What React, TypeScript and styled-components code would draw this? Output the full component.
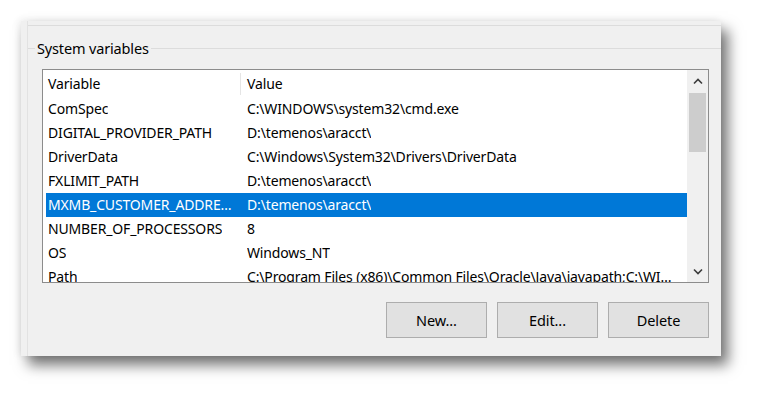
import styled, { createGlobalStyle } from 'styled-components';

const GlobalStyle = createGlobalStyle`
  html, body {
    margin: 0;
    padding: 0;
    background: #ffffff;
  }
  body {
    font-family: 'Noto Sans', 'Open Sans', sans-serif;
    font-size: 14px;
    letter-spacing: -0.15px;
    color: #000000;
  }
`;

const Page = styled.div`
  width: 763px;
  height: 398px;
  padding: 21px 0 0 21px;
  box-sizing: border-box;
`;

const Panel = styled.div`
  width: 700px;
  height: 335px;
  background: #f0f0f0;
  box-shadow: 7px 9px 13px rgba(0, 0, 0, 0.55), -2px -1px 8px rgba(0, 0, 0, 0.08);
  padding-left: 6px;
  box-sizing: border-box;
  display: flex;
  flex-direction: column;
  overflow: hidden;
`;

const Frame = styled.div`
  flex: 1;
  display: flex;
  flex-direction: column;
  border-left: 1px solid #e2e2e2;
`;

const PrevGroupEdge = styled.div`
  height: 4px;
  border-bottom: 1px solid #dcdcdc;
`;

const Group = styled.fieldset`
  margin: 12px 0 0 0;
  padding: 0 0 0 14px;
  border: none;
  border-top: 1px solid #dcdcdc;
  min-inline-size: 0;
`;

const Legend = styled.legend`
  margin-left: -7px;
  padding: 0 2px;
  font-size: 14.5px;
  line-height: 20px;
`;

const ListBox = styled.div`
  margin-top: 11px;
  width: 667px;
  height: 214px;
  box-sizing: border-box;
  border: 1px solid #8c8c8c;
  background: #ffffff;
  display: flex;
  overflow: hidden;
`;

const Rows = styled.div`
  flex: 1;
  padding-left: 3px;
  overflow: hidden;
  min-width: 0;
`;

const Row = styled.div<{ $selected?: boolean; $header?: boolean }>`
  display: grid;
  grid-template-columns: 195px minmax(0, 1fr);
  height: ${(p) => (p.$header ? '27px' : '24px')};
  align-items: center;
  background: ${(p) => (p.$selected ? '#0078d7' : 'transparent')};
  color: ${(p) => (p.$selected ? '#ffffff' : '#000000')};
`;

const Cell = styled.div<{ $divider?: boolean }>`
  padding-left: ${(p) => (p.$divider ? '6px' : '2px')};
  padding-right: ${(p) => (p.$divider ? '8px' : '4px')};
  white-space: nowrap;
  overflow: hidden;
  height: 100%;
  display: flex;
  align-items: center;
  line-height: 20px;
  min-width: 0;
`;

const HeaderCell = styled(Cell)`
  position: relative;
  &::after {
    content: '';
    position: absolute;
    right: 0;
    top: 3px;
    bottom: 2px;
    width: 1px;
    background: #e5e5e5;
  }
`;

const CellText = styled.span`
  min-width: 0;
  overflow: hidden;
  text-overflow: ellipsis;
  white-space: nowrap;
`;

const ScrollBar = styled.div`
  width: 21px;
  background: #f0f0f0;
  display: flex;
  flex-direction: column;
  align-items: center;
`;

const ArrowBox = styled.div`
  height: 22px;
  width: 100%;
  display: flex;
  align-items: center;
  justify-content: center;
`;

const Track = styled.div`
  flex: 1;
  width: 100%;
  padding: 1px 2px 0 2px;
  box-sizing: border-box;
`;

const Thumb = styled.div`
  height: 59px;
  background: #cdcdcd;
`;

const Buttons = styled.div`
  display: flex;
  justify-content: flex-end;
  gap: 10px;
  width: 667px;
  margin-top: 19px;
`;

const Button = styled.button`
  width: 101px;
  height: 36px;
  background: #e1e1e1;
  border: 1px solid #adadad;
  font-family: inherit;
  font-size: 14.5px;
  letter-spacing: -0.1px;
  color: #000000;
  padding: 0;
`;

const Chevron = ({ up }: { up?: boolean }) => (
  <svg width="10" height="7" viewBox="0 0 10 7">
    <polyline
      points={up ? '1,5.5 5,1.5 9,5.5' : '1,1.5 5,5.5 9,1.5'}
      fill="none"
      stroke="#3c3c3c"
      strokeWidth="1.6"
    />
  </svg>
);

const variables = [
  ['ComSpec', 'C:\\WINDOWS\\system32\\cmd.exe'],
  ['DIGITAL_PROVIDER_PATH', 'D:\\temenos\\aracct\\'],
  ['DriverData', 'C:\\Windows\\System32\\Drivers\\DriverData'],
  ['FXLIMIT_PATH', 'D:\\temenos\\aracct\\'],
  ['MXMB_CUSTOMER_ADDRESS_PATH', 'D:\\temenos\\aracct\\'],
  ['NUMBER_OF_PROCESSORS', '8'],
  ['OS', 'Windows_NT'],
  [
    'Path',
    'C:\\Program Files (x86)\\Common Files\\Oracle\\Java\\javapath;C:\\WINDOWS\\system32',
  ],
];

export default function App() {
  return (
    <Page>
      <GlobalStyle />
      <Panel>
        <Frame>
          <PrevGroupEdge />
          <Group>
            <Legend>System variables</Legend>
            <ListBox>
              <Rows>
                <Row $header>
                  <HeaderCell>Variable</HeaderCell>
                  <Cell $divider>Value</Cell>
                </Row>
                {variables.map(([name, value]) => (
                  <Row key={name} $selected={name.startsWith('MXMB')}>
                    <Cell>
                      <CellText>{name}</CellText>
                    </Cell>
                    <Cell $divider>
                      <CellText>{value}</CellText>
                    </Cell>
                  </Row>
                ))}
              </Rows>
              <ScrollBar>
                <ArrowBox>
                  <Chevron up />
                </ArrowBox>
                <Track>
                  <Thumb />
                </Track>
                <ArrowBox>
                  <Chevron />
                </ArrowBox>
              </ScrollBar>
            </ListBox>
            <Buttons>
              <Button>New...</Button>
              <Button>Edit...</Button>
              <Button>Delete</Button>
            </Buttons>
          </Group>
        </Frame>
      </Panel>
    </Page>
  );
}
